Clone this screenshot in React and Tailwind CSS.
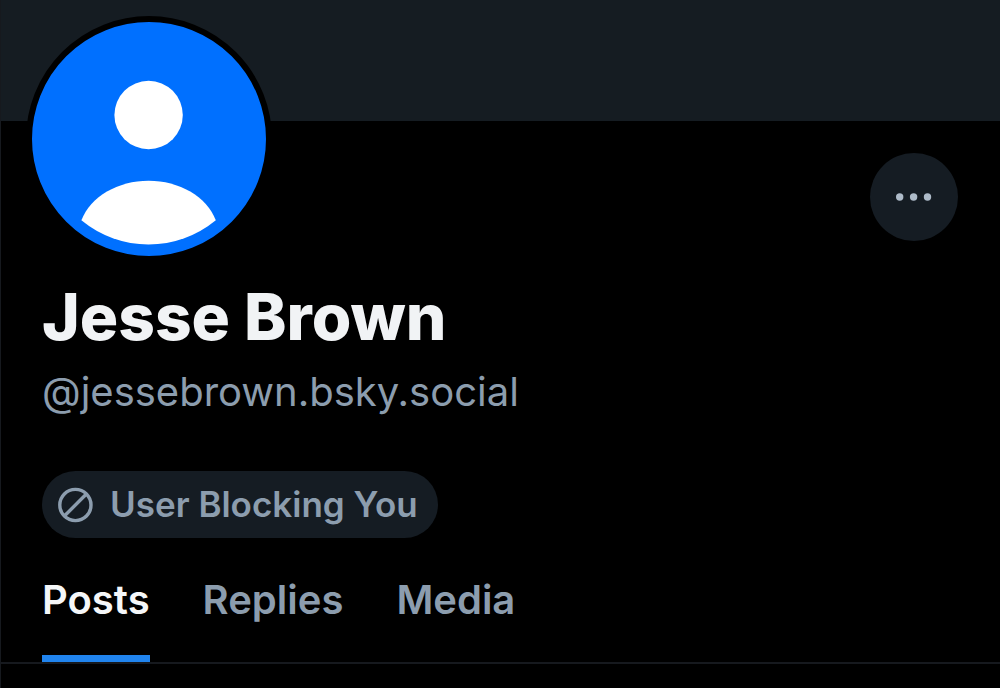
import React, { useState } from "react";

const tabs = ["Posts", "Replies", "Media"];

const DefaultAvatar = () => (
  <div className="-mt-[105px] rounded-full border-6 border-black bg-[#0070ff]">
    <svg
      viewBox="0 0 234 234"
      className="block size-[234px]"
      role="img"
      aria-label="Jesse Brown"
    >
      <circle cx="116.6" cy="93" r="34.2" fill="#fff" />
      <path
        d="M49.4 198.300C58.500 174.500 86 158.700 116.600 158.700S174.700 174.500 183.800 198.300A105.500 105.500 0 0 1 49.400 198.300Z"
        fill="#fff"
      />
    </svg>
  </div>
);

const MoreButton = () => (
  <button
    type="button"
    aria-label="More options"
    className="mt-8 flex size-[88px] items-center justify-center rounded-full bg-[#151c23]"
  >
    <svg viewBox="0 0 36 8" className="h-2 w-9" fill="#aebbc9">
      <circle cx="3.7" cy="4" r="3.7" />
      <circle cx="17.6" cy="4" r="3.7" />
      <circle cx="31.5" cy="4" r="3.7" />
    </svg>
  </button>
);

const BlockedLabel = () => (
  <button
    type="button"
    className="mt-[55px] flex h-[67px] items-center gap-4 rounded-full bg-[#151c23] pr-5 pl-4 text-[35px] font-semibold text-[#8c9dae]"
  >
    <svg
      viewBox="0 0 36 36"
      className="size-9"
      fill="none"
      stroke="currentColor"
      strokeWidth="3.4"
    >
      <circle cx="17.4" cy="18" r="15.6" />
      <path d="M6.4 29L28.4 7" />
    </svg>
    User Blocking You
  </button>
);

const ProfileTabs = () => {
  const [active, setActive] = useState("Posts");

  return (
    <nav
      role="tablist"
      className="mt-[38px] flex gap-[53px] border-b-2 border-[#16191e] pl-[41px]"
    >
      {tabs.map((tab) => (
        <button
          key={tab}
          type="button"
          role="tab"
          aria-selected={active === tab}
          onClick={() => setActive(tab)}
          className={`border-b-7 pb-[31px] text-[40px] leading-12 font-semibold ${
            active === tab
              ? "border-[#2084ee] text-[#f5f7f9]"
              : "border-transparent text-[#8c9dae]"
          }`}
        >
          {tab}
        </button>
      ))}
    </nav>
  );
};

const App = () => {
  return (
    <main className="min-h-screen border-l border-[#16191e] bg-black font-['Inter',sans-serif]">
      <div className="h-[121px] bg-[#151c22]" />
      <header>
        <div className="flex items-start justify-between pr-[42px] pl-[25px]">
          <DefaultAvatar />
          <MoreButton />
        </div>
        <div className="flex flex-col items-start px-[41px]">
          <h1 className="mt-[23px] text-[64px] leading-16 font-extrabold text-[#f1f3f5]">
            Jesse Brown
          </h1>
          <p className="mt-[19px] text-[40px] leading-12 text-[#8c9dae]">
            @jessebrown.bsky.social
          </p>
          <BlockedLabel />
        </div>
      </header>
      <ProfileTabs />
    </main>
  );
};

export default App;
